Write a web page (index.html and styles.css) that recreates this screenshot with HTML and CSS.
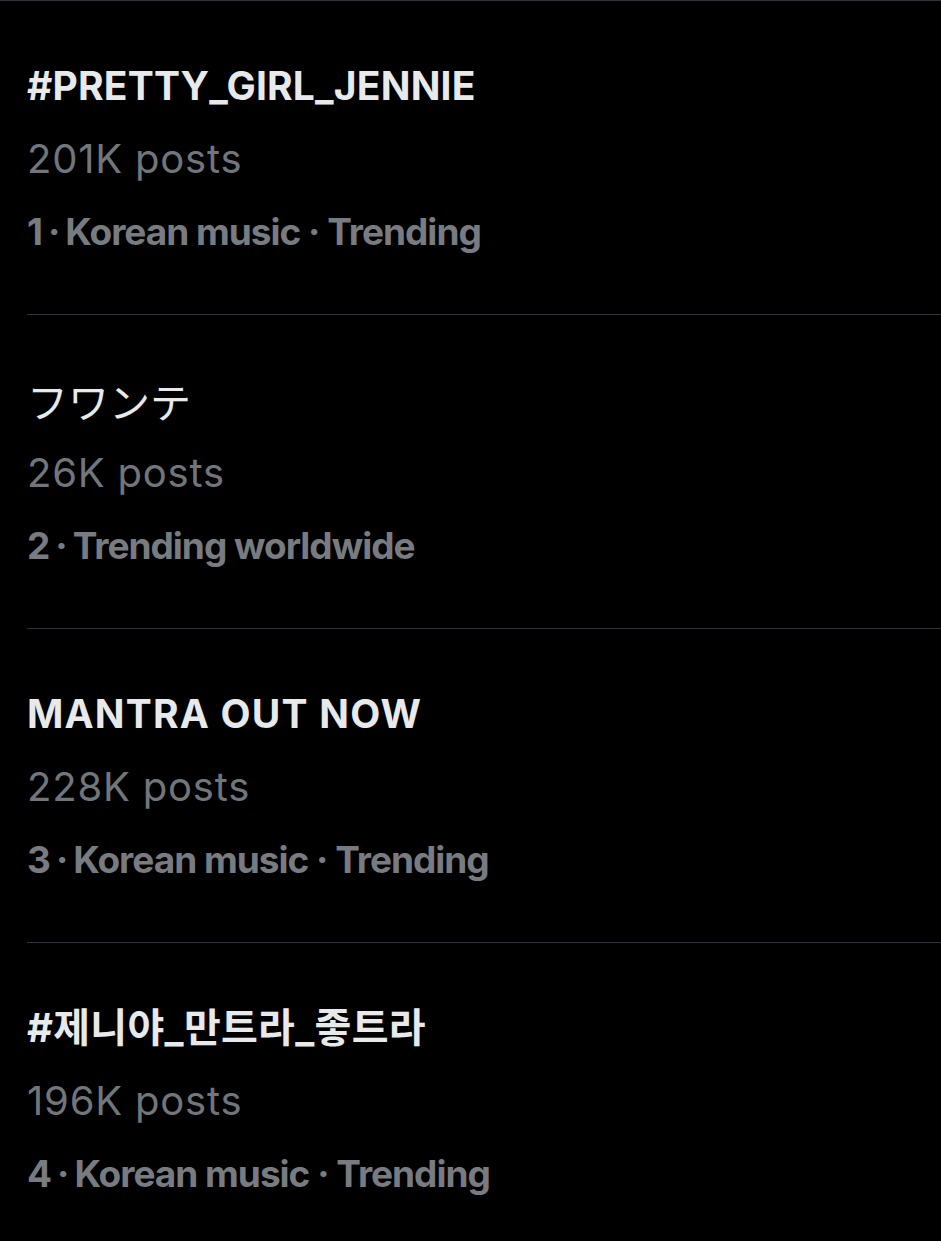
FILE: index.html
```html
<!DOCTYPE html>
<html lang="en">
<head>
    <meta charset="UTF-8">
    <meta name="viewport" content="width=device-width, initial-scale=1.0">
    <title>Trending</title>
    <link rel="stylesheet" href="styles.css">
</head>
<body>

    <!-- Trends list -->
    <div class="trends">
        <div class="trend">
            <div class="trend-title">#PRETTY_GIRL_JENNIE</div>
            <div class="trend-posts">201K posts</div>
            <div class="trend-meta">1<span class="rank-dot">·</span>Korean music · Trending</div>
        </div>

        <div class="trend">
            <div class="trend-title jp">フワンテ</div>
            <div class="trend-posts">26K posts</div>
            <div class="trend-meta">2<span class="rank-dot">·</span>Trending worldwide</div>
        </div>

        <div class="trend">
            <div class="trend-title wide">MANTRA OUT NOW</div>
            <div class="trend-posts">228K posts</div>
            <div class="trend-meta">3<span class="rank-dot">·</span>Korean music · Trending</div>
        </div>

        <div class="trend">
            <div class="trend-title kr">#제니야_만트라_좋트라</div>
            <div class="trend-posts">196K posts</div>
            <div class="trend-meta">4<span class="rank-dot">·</span>Korean music · Trending</div>
        </div>
    </div>

</body>
</html>
```

FILE: styles.css
```css
* {
    margin: 0;
    padding: 0;
    box-sizing: border-box;
}

body {
    font-family: Inter, "Noto Sans CJK KR", sans-serif;
    background-color: #000;
    border-top: 1px solid #333639;
    min-height: 100vh;
}

/* Trends list */
.trends {
    margin-left: 27px;
    display: flex;
    flex-direction: column;
}

.trend {
    padding: 57px 0 55px 0;
    border-bottom: 1px solid #2f3336;
}

.trend:last-child {
    border-bottom: none;
}

.trend-title {
    color: #e7e9ea;
    font-size: 39px;
    font-weight: 700;
    line-height: 56px;
    letter-spacing: 0.2px;
}

.trend-title.wide {
    letter-spacing: 1.2px;
}

.trend-title.jp {
    font-family: "Noto Sans CJK JP", sans-serif;
    font-size: 41px;
    font-weight: 400;
    letter-spacing: 0;
}

.trend-title.kr {
    font-size: 40px;
    letter-spacing: 0.3px;
}

.trend-posts {
    color: #71767b;
    font-size: 40px;
    font-weight: 400;
    line-height: 90px;
    letter-spacing: 0.8px;
}

.trend-meta {
    color: #787b80;
    font-size: 37px;
    font-weight: 700;
    line-height: 55px;
    letter-spacing: -1px;
}

.rank-dot {
    margin: 0 6px;
}
```
